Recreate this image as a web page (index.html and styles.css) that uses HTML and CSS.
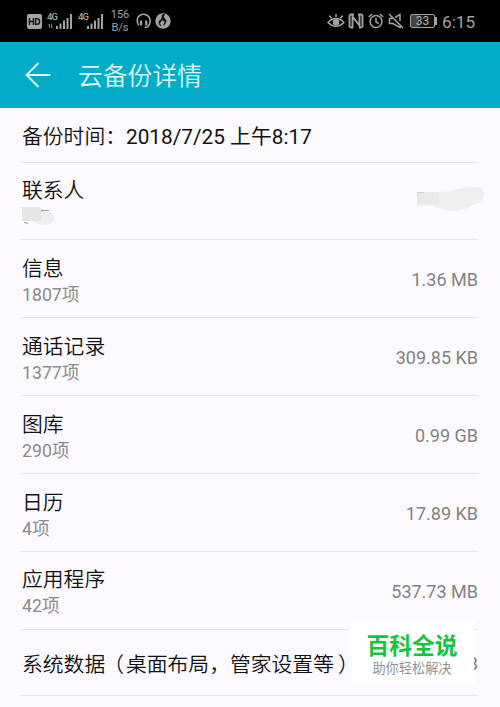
FILE: index.html
```html
<!DOCTYPE html>
<html lang="zh-CN">
<head>
<meta charset="utf-8">
<title>云备份详情</title>
<link rel="stylesheet" href="styles.css">
</head>
<body>
<header class="status">
  <div class="status-left">
    <svg class="hd" width="15" height="15" viewBox="0 0 15 15"><rect width="15" height="15" rx="2" fill="#a3a3a3"/><path d="M2.400 4v7M6.400 4v7M2.400 7.500h4M8.600 4.700h1.600q2.400 0 2.400 2.800t-2.400 2.800H8.600z" fill="none" stroke="#151515" stroke-width="1.400"/></svg>
    <div class="signal"><span class="net">4G</span>
      <svg width="26" height="18" viewBox="0 0 26 18"><path d="M2.500 12v4M1 13.500l1.500-1.500M4.500 12v4l1-1.500" stroke="#777" fill="none"/><path d="M10 14v3M13.500 11.500v5.500M17 8.500v8.500M20.500 6v11M24 2v15" stroke="#a3a3a3" stroke-width="2"/></svg>
    </div>
    <div class="signal second"><span class="net">4G</span>
      <svg width="26" height="18" viewBox="0 0 26 18"><path d="M10 14v3M13.500 11.500v5.500M17 8.500v8.500M20.500 6v11M24 2v15" stroke="#a3a3a3" stroke-width="2"/></svg>
    </div>
    <div class="speed"><span>156</span><span>B/s</span></div>
    <svg class="headset" width="15" height="16" viewBox="0 0 15 16" fill="none" stroke="#a3a3a3"><path d="M2.500 12.500C-.5 6 2.500 1.300 7.500 1.300S15.500 6 13.500 11Q12.500 14.500 8.500 14.500" stroke-width="1.600"/><path d="M5 7.500v5M10.200 7.500v5" stroke-width="2.200"/></svg>
    <svg class="globe" width="16" height="16" viewBox="0 0 16 16"><circle cx="8" cy="8" r="7.700" fill="#a3a3a3"/><path d="M7 1.500L10 1 8.800 4 11.500 7.500 10 11.500 8 13 9.500 9 7.500 7 5 10 6.500 13.500 4.500 12.500 3.500 8.500 6.500 5.500z" fill="#111"/></svg>
  </div>
  <div class="status-right">
    <svg width="18" height="16" viewBox="0 0 18 16" fill="none" stroke="#a3a3a3" stroke-width="1.500"><path d="M1 9.500Q9 1.500 17 9.500 9 17 1 9.500zM9 4V1M4.500 5.500L2.500 2.500M13.500 5.500l2-3"/><circle cx="9" cy="9.300" r="2.500" fill="#a3a3a3"/></svg>
    <svg class="nfc" width="16" height="16" viewBox="0 0 16 16" fill="none"><path d="M6 1.500H3Q1.500 1.500 1.500 3v10q0 1.500 1.500 1.500h1.500V3.500L11.500 12.500V3Q11.500 1.500 10 1.500h3q1.500 0 1.500 1.500v10q0 1.500-1.500 1.500h-2" stroke="#a3a3a3" stroke-width="1.900"/></svg>
    <svg class="alarm" width="16" height="16" viewBox="0 0 16 16" fill="none" stroke="#a3a3a3" stroke-width="1.500"><circle cx="8" cy="8.500" r="5.900"/><path d="M8 5v4l2.700 1.500M.8 4l3.200-2.900M15.200 4L12 1.100"/></svg>
    <svg class="mute" width="16" height="16" viewBox="0 0 16 16" fill="none" stroke="#a3a3a3" stroke-width="1.500"><path d="M4.500 5.500h-3v5h3.500l7 4V11.500M7 4.500l5-3v6.500M1 1l14 14"/></svg>
    <div class="battery"><span>33</span></div>
    <time>6:15</time>
  </div>
</header>
<nav class="bar">
  <svg width="26" height="26" viewBox="0 0 26 26" fill="none" stroke="#d9fbff" stroke-width="1.900"><path d="M25.500 13H1.500M13.500 1L1.500 13l12 12"/></svg>
  <h1>云备份详情</h1>
</nav>
<main class="list">
  <section class="row time"><h2>备份时间：<span class="date">2018/7/25 上午8:17</span></h2></section>
  <section class="row">
    <div><h2>联系人</h2><svg class="mask" width="34" height="22" viewBox="0 0 34 22"><path d="M0 1h18l4 4v10H0z" fill="#e5e4e7"/><path d="M19 6h10q3 2 3 7-1 5-8 6-9 0-13-4h8z" fill="#eeedf0"/><path d="M19 4.500h8M2 16.500l4 .8" stroke="#999"/></svg></div>
    <svg class="smear" width="68" height="26" viewBox="0 0 68 26"><path d="M0 5h22l10-1Q47 0 62 0q6 2 5 9-1 7-11 9-9 6-19 6-13 0-20-5H0z" fill="#efeff1"/><path d="M0 5h22v12H0z" fill="#e9e9eb"/><path d="M0 5.500h7" stroke="#ccc"/></svg>
  </section>
  <section class="row"><div><h2>信息</h2><p>1807项</p></div><span class="size">1.36 MB</span></section>
  <section class="row"><div><h2>通话记录</h2><p>1377项</p></div><span class="size">309.85 KB</span></section>
  <section class="row"><div><h2>图库</h2><p>290项</p></div><span class="size">0.99 GB</span></section>
  <section class="row"><div><h2>日历</h2><p>4项</p></div><span class="size">17.89 KB</span></section>
  <section class="row"><div><h2>应用程序</h2><p>42项</p></div><span class="size">537.73 MB</span></section>
  <section class="row system"><h2>系统数据<span class="open">（</span>桌面布局，管家设置等<span class="close">）</span></h2><span class="size">B</span></section>
</main>
<aside class="watermark"><strong>百科全说</strong><span>助你轻松解决</span></aside>
</body>
</html>
```

FILE: styles.css
```css
* { box-sizing: border-box; }
body {
  margin: 0;
  height: 707px;
  overflow: hidden;
  position: relative;
  background: #fcfafe;
  color: #111;
  font-family: Roboto, "Noto Sans CJK SC", sans-serif;
}
h1, h2, p { margin: 0; font-weight: 400; }
svg { display: block; flex: none; }

.status {
  height: 42px;
  background: #000;
  color: #a3a3a3;
  display: flex;
  justify-content: space-between;
  padding: 0 24px 0 27px;
}
.status-left, .status-right { display: flex; align-items: center; }
.signal { position: relative; margin-left: 5px; }
.signal svg { margin-top: -1px; }
.net {
  position: absolute;
  left: 0;
  top: 0;
  font-size: 9.500px;
  line-height: 8px;
  font-weight: 500;
  letter-spacing: -.8px;
}
.speed {
  display: flex;
  flex-direction: column;
  align-items: center;
  width: 18px;
  margin-left: 7px;
  font-size: 11px;
  line-height: 13px;
}
.headset { margin-left: 7px; }
.globe { margin-left: 4px; }
.nfc { margin-left: 3px; }
.alarm { margin-left: 4px; }
.mute { margin-left: 4px; }
.battery {
  position: relative;
  width: 25px;
  height: 14px;
  margin-left: 6px;
  border: 1px solid #a3a3a3;
  border-radius: 2px;
  background: linear-gradient(90deg, #444 33%, #111 33%);
  font-size: 12px;
  line-height: 12px;
  text-align: center;
  color: #b0b0b0;
}
.battery::after {
  content: "";
  position: absolute;
  right: -3px;
  top: 2px;
  width: 2px;
  height: 8px;
  background: #a3a3a3;
}
time { font-size: 17.200px; line-height: 20px; margin-left: 7px; padding-top: 1px; width: 34px; white-space: nowrap; }

.bar {
  height: 66px;
  background: #02abc7;
  color: #d9fbff;
  display: flex;
  align-items: center;
  padding-left: 25px;
}
.bar h1 { margin: 4px 0 0 27px; font-size: 24.800px; line-height: 36px; font-weight: 350; }

.list { padding: 0 22px; }
.row {
  height: 77.900px;
  border-bottom: 1px solid #e5e3e7;
  display: flex;
  align-items: center;
  justify-content: space-between;
}
.row > div { padding-top: 4px; }
.row h2 { font-size: 20.800px; line-height: 28px; white-space: nowrap; font-weight: 350; }
.row p { font-size: 17.700px; line-height: 24px; color: #8a8a8a; }
.row.time { height: 54.500px; padding-top: 4px; }
.date { font-size: 20.800px; font-weight: 400; }
.size { font-size: 18px; line-height: 24px; color: #828282; padding-top: 3px; }
.mask { height: 24px; }
.smear { margin: -1px -7px 0 0; }
.row.system { height: 66.500px; }
.row.system h2 { padding-top: 4px; }
.open { position: relative; left: -2px; }
.close { position: relative; left: 4px; }

.watermark {
  position: absolute;
  left: 350px;
  top: 621px;
  width: 124px;
  height: 62px;
  background: #fff;
  display: flex;
  flex-direction: column;
  align-items: center;
  padding-top: 12px;
}
.watermark strong { color: #15c43b; font-size: 22.800px; line-height: 28px; font-weight: 700; }
.watermark span { color: #929292; font-size: 13.200px; line-height: 16px; }
```
